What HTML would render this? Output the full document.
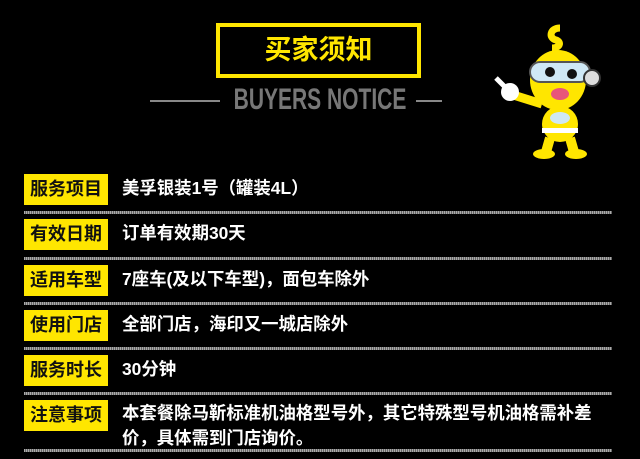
<!DOCTYPE html>
<html><head><meta charset="utf-8"><style>
*{margin:0;padding:0;box-sizing:border-box}
body{width:640px;height:459px;background:#000;position:relative;overflow:hidden;font-family:"Liberation Sans","Noto Sans CJK SC",sans-serif}
.title{position:absolute;left:216px;top:23px;width:205px;height:55px;border:4px solid #ffe600;color:#ffe600;font-size:27px;font-weight:bold;text-align:center;line-height:47px}
.sub{position:absolute;left:170px;top:84px;width:300px;text-align:center;white-space:nowrap;color:#777;font-size:30px;font-weight:bold;line-height:32px;transform:scaleX(0.7);transform-origin:center}
.ln{position:absolute;height:2px;background:#888;top:100px}
.lab{position:absolute;left:24px;width:84px;height:31px;background:#ffe600;color:#111;font-size:18px;font-weight:bold;text-align:center;line-height:31px}
.txt{position:absolute;left:122px;color:#fff;font-size:17.4px;font-weight:bold;line-height:25px;white-space:nowrap}
.sep{position:absolute;left:24px;width:588px;height:3px;background:repeating-linear-gradient(90deg,#aaa 0 1px,#666 1px 2px)}
</style></head><body>
<div class="title">买家须知</div>
<div class="ln" style="left:150px;width:70px"></div>
<div class="sub">BUYERS NOTICE</div>
<div class="ln" style="left:416px;width:26px"></div>
<svg style="position:absolute;left:490px;top:20px" width="125" height="140" viewBox="0 0 125 140">
<path d="M70 8c-10 0-12 10-4 12 6 2 4 8-4 8" stroke="#ffe600" stroke-width="7" fill="none"/>
<ellipse cx="68" cy="60" rx="28" ry="30" fill="#ffe600"/>
<rect x="40" y="42" width="60" height="20" rx="10" fill="#cfe8f5" stroke="#555" stroke-width="2"/>
<circle cx="102" cy="58" r="8" fill="#ddd" stroke="#333" stroke-width="2"/>
<circle cx="60" cy="52" r="5" fill="#111"/><circle cx="82" cy="54" r="5" fill="#111"/>
<ellipse cx="70" cy="74" rx="9" ry="6" fill="#e8557a"/>
<path d="M52 84 L20 74" stroke="#ffe600" stroke-width="9"/>
<circle cx="20" cy="72" r="9" fill="#fff"/><path d="M16 68 L6 58" stroke="#fff" stroke-width="5"/>
<ellipse cx="70" cy="104" rx="18" ry="18" fill="#ffe600"/>
<ellipse cx="70" cy="98" rx="10" ry="6" fill="#cfe8f5"/>
<rect x="52" y="108" width="36" height="5" fill="#fff"/>
<path d="M60 118 L56 132 M80 118 L84 132" stroke="#ffe600" stroke-width="10"/>
<ellipse cx="54" cy="134" rx="11" ry="5" fill="#ffe600"/><ellipse cx="86" cy="134" rx="11" ry="5" fill="#ffe600"/>
</svg>
<div class="lab" style="top:174px">服务项目</div><div class="txt" style="top:176px">美孚银装1号（罐装4L）</div>
<div class="sep" style="top:211px"></div>
<div class="lab" style="top:219px">有效日期</div><div class="txt" style="top:221px">订单有效期30天</div>
<div class="sep" style="top:257px"></div>
<div class="lab" style="top:265px">适用车型</div><div class="txt" style="top:267px">7座车(及以下车型)，面包车除外</div>
<div class="sep" style="top:302px"></div>
<div class="lab" style="top:310px">使用门店</div><div class="txt" style="top:312px">全部门店，海印又一城店除外</div>
<div class="sep" style="top:347px"></div>
<div class="lab" style="top:355px">服务时长</div><div class="txt" style="top:357px">30分钟</div>
<div class="sep" style="top:392px"></div>
<div class="lab" style="top:400px">注意事项</div><div class="txt" style="top:401px">本套餐除马靳标准机油格型号外，其它特殊型号机油格需补差<br>价，具体需到门店询价。</div>
<div class="sep" style="top:449px"></div>
</body></html>
